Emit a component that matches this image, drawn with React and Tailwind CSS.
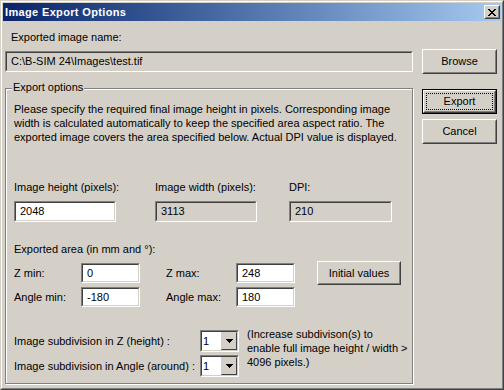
import React from 'react';

// sunken edit field, classic 3D look
const Edit = ({ className = '', value, gray }) => (
    <div className={`border border-t-[#808080] border-l-[#808080] border-b-white border-r-white ${className}`}>
        <div className={`h-full flex items-center pl-[4px] border border-t-[#404040] border-l-[#404040] border-b-[#d4d0c8] border-r-[#d4d0c8] ${gray ? 'bg-[#d4d0c8]' : 'bg-white'}`}>
            <span className="leading-[13px] whitespace-nowrap">{value}</span>
        </div>
    </div>
);

const Button = ({ className = '', children, isDefault }) => {
    if (isDefault) {
        return (
            <div className={`border border-black ${className}`}>
                <div className="h-full border border-t-white border-l-white border-b-[#404040] border-r-[#404040]">
                    <div className="h-full border border-t-[#d4d0c8] border-l-[#d4d0c8] border-b-[#808080] border-r-[#808080] p-[1px]">
                        <div className="h-full flex items-center justify-center border border-dotted border-black leading-[13px]">
                            {children}
                        </div>
                    </div>
                </div>
            </div>
        );
    }
    return (
        <div className={`border border-t-white border-l-white border-b-[#404040] border-r-[#404040] ${className}`}>
            <div className="h-full flex items-center justify-center border border-t-[#d4d0c8] border-l-[#d4d0c8] border-b-[#808080] border-r-[#808080] leading-[13px]">
                {children}
            </div>
        </div>
    );
};

const Combo = ({ value }) => (
    <div className="w-[39px] h-[22px] border border-t-[#808080] border-l-[#808080] border-b-white border-r-white">
        <div className="h-full flex border border-t-[#404040] border-l-[#404040] border-b-[#d4d0c8] border-r-[#d4d0c8] bg-white">
            <div className="flex-1 flex items-center pl-[1px] leading-[13px]">{value}</div>
            <div className="w-[16px] flex items-center justify-center bg-[#d4d0c8] border border-t-[#d4d0c8] border-l-[#d4d0c8] border-b-[#404040] border-r-[#404040]">
                <svg width="7" height="4" viewBox="0 0 7 4" shapeRendering="crispEdges">
                    <rect x="0" y="0" width="7" height="1" fill="#000" />
                    <rect x="1" y="1" width="5" height="1" fill="#000" />
                    <rect x="2" y="2" width="3" height="1" fill="#000" />
                    <rect x="3" y="3" width="1" height="1" fill="#000" />
                </svg>
            </div>
        </div>
    </div>
);

const CloseGlyph = () => (
    <svg width="8" height="7" viewBox="0 0 8 7" shapeRendering="crispEdges">
        <g fill="#000">
            <rect x="0" y="0" width="2" height="1" /><rect x="6" y="0" width="2" height="1" />
            <rect x="1" y="1" width="2" height="1" /><rect x="5" y="1" width="2" height="1" />
            <rect x="2" y="2" width="4" height="1" />
            <rect x="3" y="3" width="2" height="1" />
            <rect x="2" y="4" width="4" height="1" />
            <rect x="1" y="5" width="2" height="1" /><rect x="5" y="5" width="2" height="1" />
            <rect x="0" y="6" width="2" height="1" /><rect x="6" y="6" width="2" height="1" />
        </g>
    </svg>
);

export default function App() {
    return (
        <div className="w-[504px] h-[390px] bg-[#d4d0c8] border border-t-[#d4d0c8] border-l-[#d4d0c8] border-b-[#404040] border-r-[#404040] font-['Liberation_Sans',Arial,sans-serif] text-[11px] text-black">
            <div className="h-full flex flex-col border border-t-white border-l-white border-b-[#808080] border-r-[#808080] p-px">

                {/* TITLE BAR */}
                <div className="h-[18px] flex items-center pl-[2px] pr-[1px] bg-linear-to-r from-[#0a246a] to-[#a6caf0]">
                    <span className="font-bold text-white leading-none tracking-[0.35px]">Image Export Options</span>
                    <div className="ml-auto w-[16px] h-[14px] border border-t-white border-l-white border-b-[#404040] border-r-[#404040] bg-[#d4d0c8]">
                        <div className="h-full flex items-center justify-center border border-t-[#d4d0c8] border-l-[#d4d0c8] border-b-[#808080] border-r-[#808080]">
                            <CloseGlyph />
                        </div>
                    </div>
                </div>

                <div className="flex flex-1 pl-[2px] gap-[9px]">
                    {/* LEFT COLUMN */}
                    <div className="w-[408px] flex flex-col">
                        <div className="pl-[6px] pt-[10px] leading-[13px]">Exported image name:</div>
                        <Edit className="mt-[7px] h-[21px]" value="C:\B-SIM 24\Images\test.tif" gray />

                        {/* EXPORT OPTIONS GROUP */}
                        <div className="relative mt-[16px] h-[296px] border border-[#808080] shadow-[inset_1px_1px_0_#fff,1px_1px_0_#fff] pl-[8px] pt-[13px]">
                            <span className="absolute top-[-8px] left-[6px] px-[1px] bg-[#d4d0c8] leading-[13px]">Export options</span>

                            <p className="leading-[14px] whitespace-nowrap">
                                Please specify the required final image height in pixels. Corresponding image<br />
                                width is calculated automatically to keep the specified area aspect ratio. The<br />
                                exported image covers the area specified below. Actual DPI value is displayed.
                            </p>

                            <div className="flex mt-[36px]">
                                <div className="w-[141px] flex flex-col">
                                    <span className="leading-[14px]">Image height (pixels):</span>
                                    <Edit className="mt-[7px] w-[102px] h-[21px]" value="2048" />
                                </div>
                                <div className="w-[134px] flex flex-col">
                                    <span className="leading-[14px]">Image width (pixels):</span>
                                    <Edit className="mt-[7px] w-[102px] h-[21px]" value="3113" gray />
                                </div>
                                <div className="w-[103px] flex flex-col">
                                    <span className="leading-[14px]">DPI:</span>
                                    <Edit className="mt-[7px] w-[103px] h-[21px]" value="210" gray />
                                </div>
                            </div>

                            <div className="mt-[20px] leading-[14px]">Exported area (in mm and °):</div>

                            <div className="flex items-center mt-[5px] h-[24px]">
                                <span className="w-[67px]">Z min:</span>
                                <Edit className="w-[59px] h-[20px]" value="0" />
                                <span className="ml-[26px] w-[70px]">Z max:</span>
                                <Edit className="w-[59px] h-[20px]" value="248" />
                                <Button className="ml-[22px] w-[84px] h-[24px]">Initial values</Button>
                            </div>
                            <div className="flex items-center mt-[2px] h-[20px]">
                                <span className="w-[67px]">Angle min:</span>
                                <Edit className="w-[59px] h-[20px]" value="-180" />
                                <span className="ml-[26px] w-[70px]">Angle max:</span>
                                <Edit className="w-[59px] h-[20px]" value="180" />
                            </div>

                            <div className="flex mt-[23px]">
                                <div className="flex flex-col gap-[3px]">
                                    <div className="flex items-center h-[22px]">
                                        <span className="w-[186px]">Image subdivision in Z (height) :</span>
                                        <Combo value="1" />
                                    </div>
                                    <div className="flex items-center h-[22px]">
                                        <span className="w-[186px]">Image subdivision in Angle (around) :</span>
                                        <Combo value="1" />
                                    </div>
                                </div>
                                <p className="ml-[8px] -mt-[3px] leading-[14px] whitespace-nowrap">
                                    (Increase subdivison(s) to<br />
                                    enable full image height / width &gt;<br />
                                    4096 pixels.)
                                </p>
                            </div>
                        </div>
                    </div>

                    {/* RIGHT COLUMN */}
                    <div className="w-[75px] flex flex-col pt-[28px]">
                        <Button className="h-[25px]">Browse</Button>
                        <Button className="mt-[15px] h-[25px]" isDefault>Export</Button>
                        <Button className="mt-[5px] h-[25px]">Cancel</Button>
                    </div>
                </div>
            </div>
        </div>
    );
}
